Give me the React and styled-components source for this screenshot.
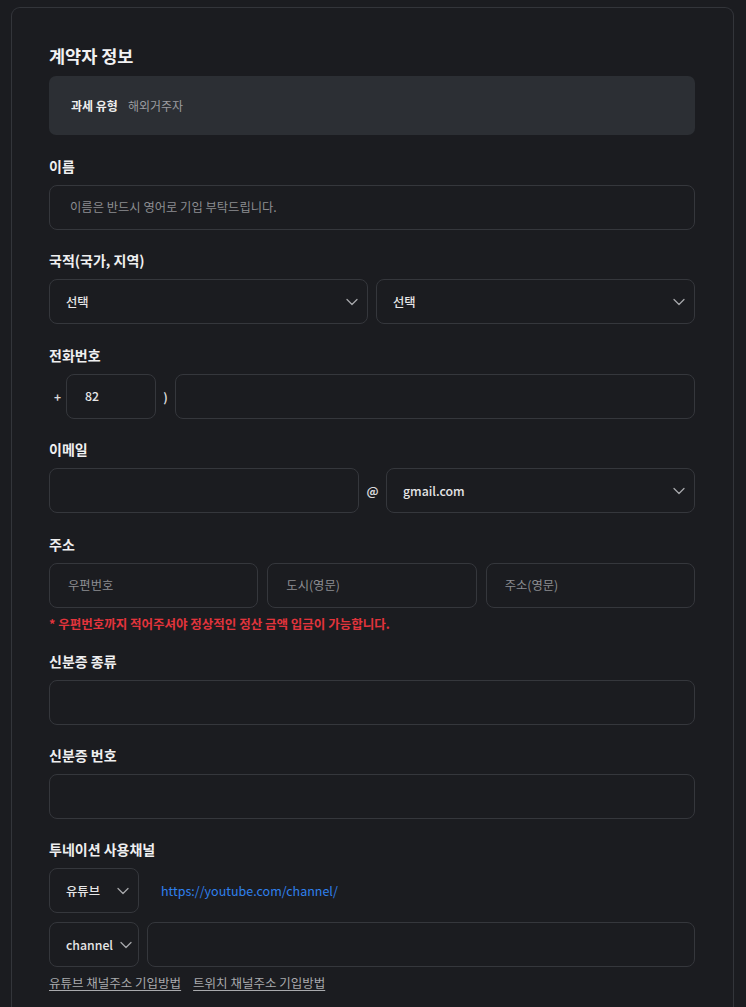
import React from "react";
import styled, { createGlobalStyle } from "styled-components";

const Global = createGlobalStyle`
  html, body {
    margin: 0;
    background: #1b1c20;
  }
  body {
    font-family: "Noto Sans CJK KR", "Noto Sans", sans-serif;
    color: #e9e9ea;
  }
`;

const Card = styled.div`
  margin: 7px 12px 0 11px;
  border: 1px solid #33353a;
  border-bottom: none;
  border-radius: 9px 9px 0 0;
  padding: 36px 38px 30px 37px;
  min-height: 1000px;
  box-sizing: border-box;
`;

const Title = styled.h2`
  margin: 0 0 8px;
  font-size: 17.5px;
  line-height: 24px;
  font-weight: 700;
  color: #f2f2f3;
`;

const InfoBox = styled.div`
  height: 59px;
  border-radius: 7px;
  background: #2c2f34;
  display: flex;
  align-items: center;
  gap: 10px;
  padding-left: 22px;
  font-size: 12px;
`;

const InfoKey = styled.span`
  font-weight: 700;
  color: #eeeeee;
`;

const InfoVal = styled.span`
  color: #9b9ca0;
`;

const Section = styled.div`
  margin-top: ${(p) => p.$top ?? 20.5}px;
`;

const Label = styled.div`
  font-size: 14px;
  line-height: 20px;
  font-weight: 700;
  color: #efeff0;
  margin-bottom: 9px;
`;

const Row = styled.div`
  display: flex;
  align-items: center;
  gap: ${(p) => p.$gap ?? 8}px;
  & + & {
    margin-top: 9px;
  }
`;

const Field = styled.div`
  box-sizing: border-box;
  height: 45px;
  border: 1px solid #35373c;
  border-radius: 8px;
  background: #1b1c20;
  display: flex;
  align-items: center;
  justify-content: space-between;
  padding: 0 ${(p) => p.$padR ?? 16}px 0 ${(p) => p.$padL ?? 20}px;
  font-size: 12.3px;
  color: ${(p) => (p.$value ? "#e6e6e7" : "#8c8d91")};
  font-weight: ${(p) => (p.$value ? 500 : 400)};
  flex: ${(p) => (p.$w ? `0 0 ${p.$w}px` : "1 1 0")};
  min-width: 0;
`;

const Sep = styled.span`
  font-size: 12px;
  font-weight: 700;
  color: #d8d8da;
  width: ${(p) => p.$w}px;
  text-align: center;
  flex: none;
`;

const LinkText = styled.span`
  font-size: 12.5px;
  color: #2f80ed;
  margin-left: 14px;
`;

const ErrorText = styled.div`
  margin-top: 7px;
  font-size: 12.5px;
  line-height: 17px;
  font-weight: 700;
  color: #e2343c;
`;

const HelpLinks = styled.div`
  margin-top: 7px;
  display: flex;
  gap: 12px;
`;

const HelpLink = styled.a`
  font-size: 12.5px;
  line-height: 18px;
  color: #a9aaad;
  text-decoration: underline;
  text-underline-offset: 2px;
`;

const Chevron = () => (
  <svg width="12" height="8" viewBox="0 0 12 8" fill="none">
    <path d="M1 1.5l5 5 5-5" stroke="#a6a7aa" strokeWidth="1.3" strokeLinecap="round" strokeLinejoin="round" />
  </svg>
);

const Select = ({ children, w, padL = 16, padR = 9 }) => (
  <Field $value $w={w} $padL={padL} $padR={padR}>
    <span>{children}</span>
    <Chevron />
  </Field>
);

export default function App() {
  return (
    <>
      <Global />
      <Card>
        <Title>계약자 정보</Title>
        <InfoBox>
          <InfoKey>과세 유형</InfoKey>
          <InfoVal>해외거주자</InfoVal>
        </InfoBox>

        <Section>
          <Label>이름</Label>
          <Field>이름은 반드시 영어로 기입 부탁드립니다.</Field>
        </Section>

        <Section>
          <Label>국적(국가, 지역)</Label>
          <Row>
            <Select>선택</Select>
            <Select>선택</Select>
          </Row>
        </Section>

        <Section>
          <Label>전화번호</Label>
          <Row $gap={0}>
            <Sep $w={17}>+</Sep>
            <Field $value $w={90} $padL={18}>82</Field>
            <Sep $w={19}>)</Sep>
            <Field />
          </Row>
        </Section>

        <Section>
          <Label>이메일</Label>
          <Row $gap={0}>
            <Field $w={310} />
            <Sep $w={27}>@</Sep>
            <Select>gmail.com</Select>
          </Row>
        </Section>

        <Section>
          <Label>주소</Label>
          <Row $gap={9}>
            <Field $padL={18}>우편번호</Field>
            <Field $padL={18}>도시(영문)</Field>
            <Field $padL={18}>주소(영문)</Field>
          </Row>
          <ErrorText>* 우편번호까지 적어주셔야 정상적인 정산 금액 입금이 가능합니다.</ErrorText>
        </Section>

        <Section $top={19.5}>
          <Label>신분증 종류</Label>
          <Field />
        </Section>

        <Section $top={20}>
          <Label>신분증 번호</Label>
          <Field />
        </Section>

        <Section $top={20}>
          <Label>투네이션 사용채널</Label>
          <Row>
            <Select w={90}>유튜브</Select>
            <LinkText>https://youtube.com/channel/</LinkText>
          </Row>
          <Row>
            <Select w={90} padR={6}>channel</Select>
            <Field />
          </Row>
          <HelpLinks>
            <HelpLink>유튜브 채널주소 기입방법</HelpLink>
            <HelpLink>트위치 채널주소 기입방법</HelpLink>
          </HelpLinks>
        </Section>
      </Card>
    </>
  );
}
